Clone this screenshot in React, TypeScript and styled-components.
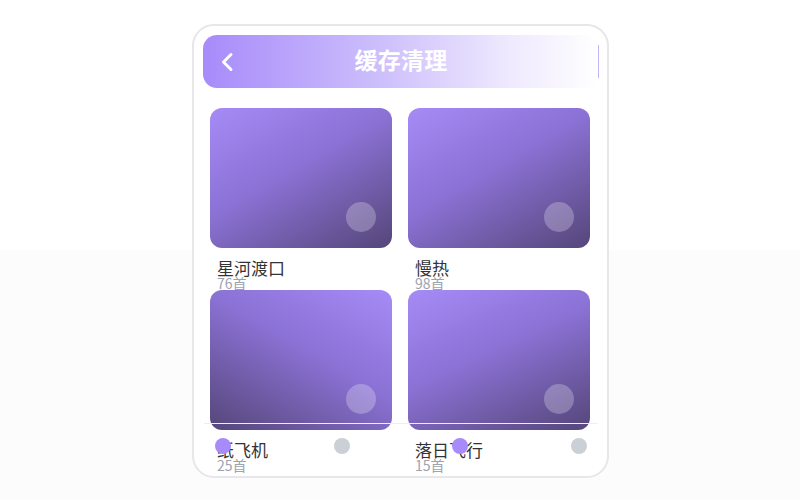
import React from "react";
import styled, { createGlobalStyle } from "styled-components";

const GlobalStyle = createGlobalStyle`
  html, body {
    margin: 0;
    padding: 0;
    height: 100%;
  }
  body {
    background: linear-gradient(to bottom, #ffffff 0%, #ffffff 50%, #fcfcfc 50%, #fcfcfc 100%);
    font-family: "Noto Sans CJK SC", "Noto Sans", sans-serif;
  }
  #root {
    height: 100%;
  }
`;

type Album = {
  name: string;
  count: number;
  angle: number;
};

const albums: Album[] = [
  { name: "星河渡口", count: 76, angle: 150 },
  { name: "慢热", count: 98, angle: 150 },
  { name: "纸飞机", count: 25, angle: 210 },
  { name: "落日飞行", count: 15, angle: 155 },
];

const tabs = [true, false, true, false];

export default function App() {
  return (
    <>
      <GlobalStyle />
      <Page>
        <Phone>
          <Header>
            <BackButton aria-label="返回">
              <svg width="14" height="20" viewBox="0 0 14 20" fill="none">
                <polyline
                  points="11,2.5 3.5,10 11,17.5"
                  stroke="#ffffff"
                  strokeWidth="3"
                  strokeLinecap="round"
                  strokeLinejoin="round"
                />
              </svg>
            </BackButton>
            <Title>缓存清理</Title>
          </Header>
          <Grid>
            {albums.map((a) => (
              <Item key={a.name}>
                <Cover $angle={a.angle}>
                  <Bubble />
                </Cover>
                <Name>{a.name}</Name>
                <Count>{a.count}首</Count>
              </Item>
            ))}
          </Grid>
          <TabBar>
            {tabs.map((on, i) => (
              <Dot key={i} $active={on} />
            ))}
          </TabBar>
        </Phone>
      </Page>
    </>
  );
}

const Page = styled.div`
  height: 100%;
  display: flex;
  align-items: center;
  justify-content: center;
`;

const Phone = styled.div`
  position: relative;
  box-sizing: border-box;
  width: 417px;
  height: 454px;
  margin: 2px 0 0 1px;
  border: 2px solid #e6e6eb;
  border-radius: 22px;
  background: #ffffff;
  overflow: hidden;
  padding: 9px 8px 0 9px;
`;

const Header = styled.div`
  position: relative;
  height: 53px;
  border-radius: 14px;
  background: linear-gradient(90deg, #a78bfa 0%, #cdbffc 45%, #efeafe 78%, #ffffff 100%);
  display: flex;
  align-items: center;
  justify-content: center;

  &::after {
    content: "";
    position: absolute;
    right: 0;
    top: 10px;
    bottom: 10px;
    width: 1px;
    background: #c4b5fd;
  }
`;

const BackButton = styled.button`
  position: absolute;
  left: 17px;
  top: 50%;
  transform: translateY(-50%);
  border: none;
  background: none;
  padding: 0;
  display: flex;
  cursor: pointer;
`;

const Title = styled.h1`
  margin: 0 0 4px;
  font-size: 23px;
  line-height: 1;
  font-weight: 700;
  color: #ffffff;
  letter-spacing: 0.3px;
`;

const Grid = styled.div`
  display: grid;
  grid-template-columns: 182px 182px;
  column-gap: 16px;
  padding: 20px 0 0 7px;
`;

const Item = styled.div`
  display: flex;
  flex-direction: column;
  height: 182px;
`;

const Cover = styled.div<{ $angle: number }>`
  position: relative;
  height: 140px;
  border-radius: 12px;
  background: linear-gradient(${(p) => p.$angle}deg, #a68bf6 0%, #8a71d4 45%, #554679 100%);
  flex-shrink: 0;
`;

const Bubble = styled.div`
  position: absolute;
  right: 16px;
  bottom: 16px;
  width: 30px;
  height: 30px;
  border-radius: 50%;
  background: rgba(255, 255, 255, 0.25);
`;

const Name = styled.div`
  margin-top: 11px;
  padding-left: 7px;
  font-size: 17px;
  line-height: 17px;
  color: #333333;
`;

const Count = styled.div`
  padding-left: 7px;
  font-size: 14px;
  line-height: 14px;
  color: #9ca3af;
`;

const TabBar = styled.div`
  position: absolute;
  left: 10px;
  right: 10px;
  bottom: 0;
  height: 53px;
  border-top: 1px solid #eceef1;
  display: flex;
  justify-content: space-between;
  align-items: flex-start;
  padding: 14px 10px 0 11px;
  box-sizing: border-box;
`;

const Dot = styled.span<{ $active: boolean }>`
  width: 16px;
  height: 16px;
  border-radius: 50%;
  background: ${(p) => (p.$active ? "#a78bfa" : "#cbd0d6")};
`;
